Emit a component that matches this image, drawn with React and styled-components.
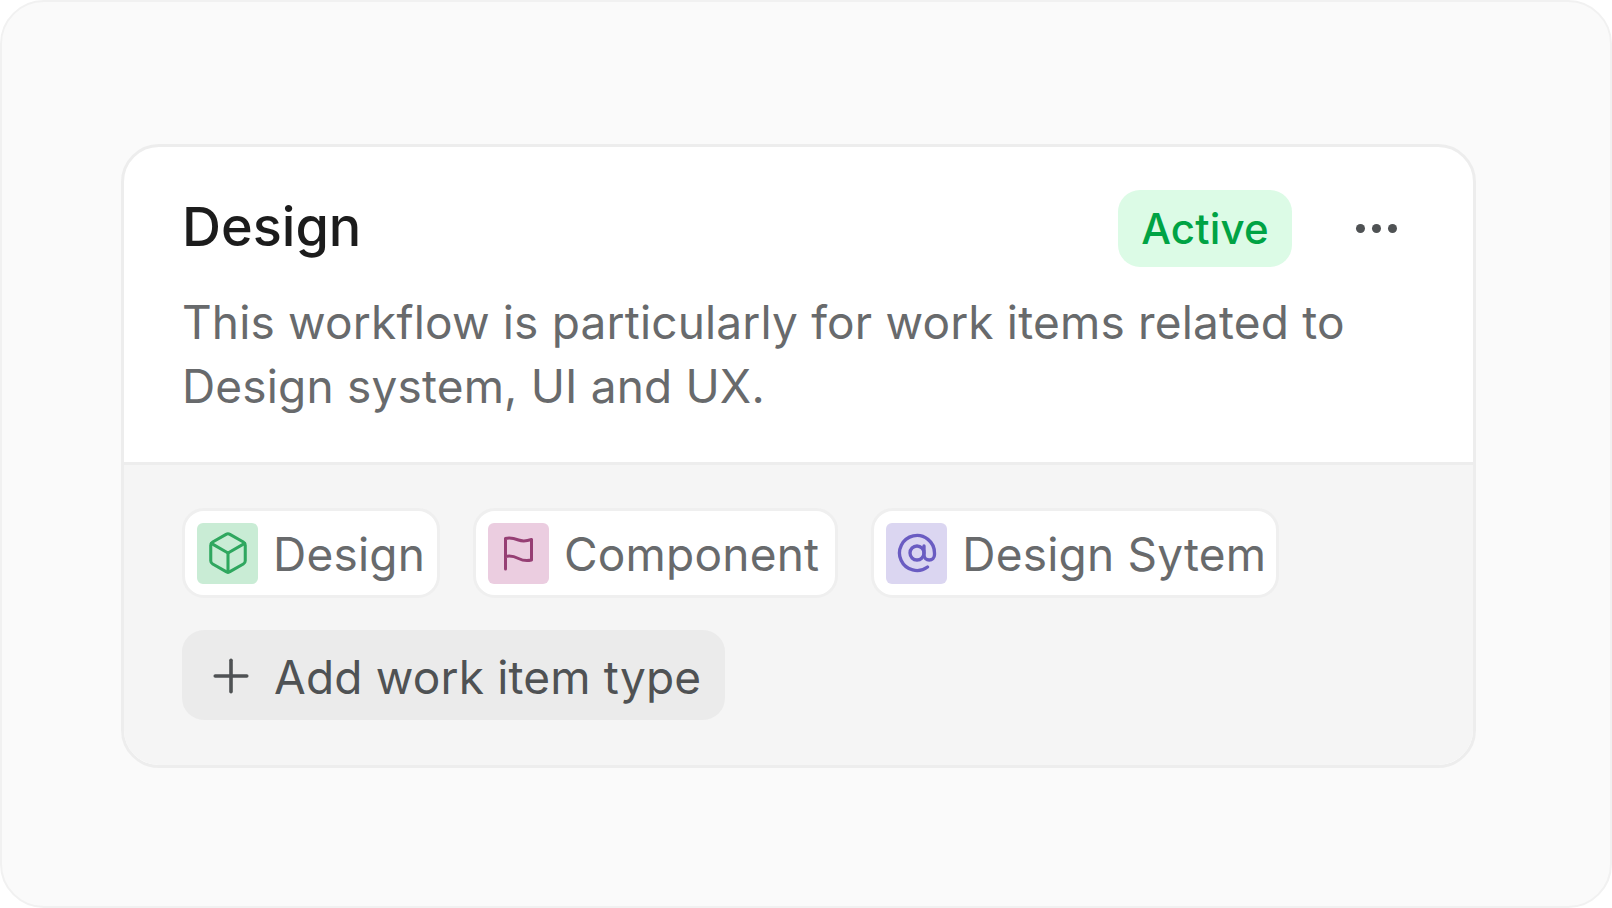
import React from "react";
import styled, { createGlobalStyle } from "styled-components";
import { Box, AtSign, Plus } from "lucide-react";

const Global = createGlobalStyle`
  html, body { margin: 0; padding: 0; background: #ffffff; }
  body { font-family: Inter, "Liberation Sans", sans-serif; -webkit-font-smoothing: antialiased; }
`;

const Frame = styled.div`
  box-sizing: border-box;
  width: 1612px;
  height: 908px;
  padding: 142px 134px 138px 119px;
  background: #fafafa;
  border: 2px solid #f1f1f1;
  border-radius: 44px;
`;

const Card = styled.section`
  box-sizing: border-box;
  height: 100%;
  display: flex;
  flex-direction: column;
  background: #ffffff;
  border: 3px solid #ededed;
  border-radius: 38px;
  overflow: hidden;
`;

const Top = styled.div`
  box-sizing: border-box;
  height: 318px;
  flex: none;
  padding: 43px 58px 0;
  border-bottom: 3px solid #ededed;
`;

const HeadRow = styled.div`
  display: flex;
  align-items: center;
  height: 77px;
`;

const Title = styled.h2`
  flex: 1;
  margin: 0;
  padding-bottom: 4px;
  font-size: 54px;
  line-height: 72px;
  font-weight: 500;
  color: #1c1c1c;
`;

const Badge = styled.span`
  display: flex;
  align-items: center;
  justify-content: center;
  width: 174px;
  height: 77px;
  background: #dcfbe6;
  border-radius: 22px;
  font-size: 42px;
  font-weight: 500;
  letter-spacing: 0.15px;
  color: #00a344;
`;

const Dots = styled.button`
  display: flex;
  gap: 7px;
  margin: 0 18px 0 64px;
  padding: 0;
  border: 0;
  background: none;
`;

const Dot = styled.i`
  width: 9px;
  height: 9px;
  border-radius: 50%;
  background: #4f5254;
`;

const Description = styled.p`
  margin: 23px 0 0;
  font-size: 46px;
  line-height: 64px;
  font-weight: 400;
  letter-spacing: 0.17px;
  color: #686a6c;
`;

const Bottom = styled.div`
  flex: 1;
  display: flex;
  flex-direction: column;
  align-items: flex-start;
  gap: 32px;
  padding: 43px 58px 0;
  background: #f5f5f5;
`;

const ChipRow = styled.div`
  display: flex;
  gap: 33px;
`;

const Chip = styled.div`
  display: flex;
  align-items: center;
  gap: 15px;
  height: 90px;
  box-sizing: border-box;
  padding: 0 ${(p) => p.$end}px 0 12px;
  background: #ffffff;
  border: 3px solid #efefef;
  border-radius: 22px;
  font-size: 46px;
  letter-spacing: 0.2px;
  color: #686a6c;
`;

const ChipLabel = styled.span`
  padding-top: 2px;
`;

const IconTile = styled.span`
  width: 61px;
  height: 61px;
  display: flex;
  align-items: center;
  justify-content: center;
  border-radius: 6px;
  background: ${(p) => p.$bg};
  color: ${(p) => p.$fg};
`;

const AddButton = styled.button`
  display: flex;
  align-items: center;
  gap: 16px;
  box-sizing: border-box;
  height: 90px;
  width: 543px;
  padding: 1px 0 0 22px;
  border: 0;
  border-radius: 22px;
  background: #ebebeb;
  font-family: inherit;
  font-size: 46px;
  letter-spacing: 0.17px;
  color: #4f5254;
`;

const AddLabel = styled.span`
  padding-top: 3px;
`;

const FlagIcon = () => (
  <svg width="48" height="48" viewBox="0 0 48 48" fill="none" stroke="currentColor" strokeWidth="3" strokeLinecap="round" strokeLinejoin="round">
    <path d="M10.5 40V9.5c5-1.5 9 0 13 1.5s8.5 1 13-.5V31c-4.5 1-9 .5-13-1.5s-8.5-3-13-2" />
  </svg>
);

export default function App() {
  return (
    <>
      <Global />
      <Frame>
        <Card>
          <Top>
            <HeadRow>
              <Title>Design</Title>
              <Badge>Active</Badge>
              <Dots aria-label="More">
                <Dot />
                <Dot />
                <Dot />
              </Dots>
            </HeadRow>
            <Description>
              This workflow is particularly for work items related to
              <br />
              Design system, UI and UX.
            </Description>
          </Top>
          <Bottom>
            <ChipRow>
              <Chip $end={12}>
                <IconTile $bg="#c9ecd5" $fg="#2fa75f">
                  <Box size={46} strokeWidth={1.6} />
                </IconTile>
                <ChipLabel>Design</ChipLabel>
              </Chip>
              <Chip $end={16}>
                <IconTile $bg="#ebcde0" $fg="#963f74">
                  <FlagIcon />
                </IconTile>
                <ChipLabel>Component</ChipLabel>
              </Chip>
              <Chip $end={10}>
                <IconTile $bg="#dbd6f1" $fg="#6a5cc2">
                  <AtSign size={42} strokeWidth={1.9} />
                </IconTile>
                <ChipLabel>Design Sytem</ChipLabel>
              </Chip>
            </ChipRow>
            <AddButton>
              <Plus size={54} strokeWidth={1.6} />
              <AddLabel>Add work item type</AddLabel>
            </AddButton>
          </Bottom>
        </Card>
      </Frame>
    </>
  );
}
